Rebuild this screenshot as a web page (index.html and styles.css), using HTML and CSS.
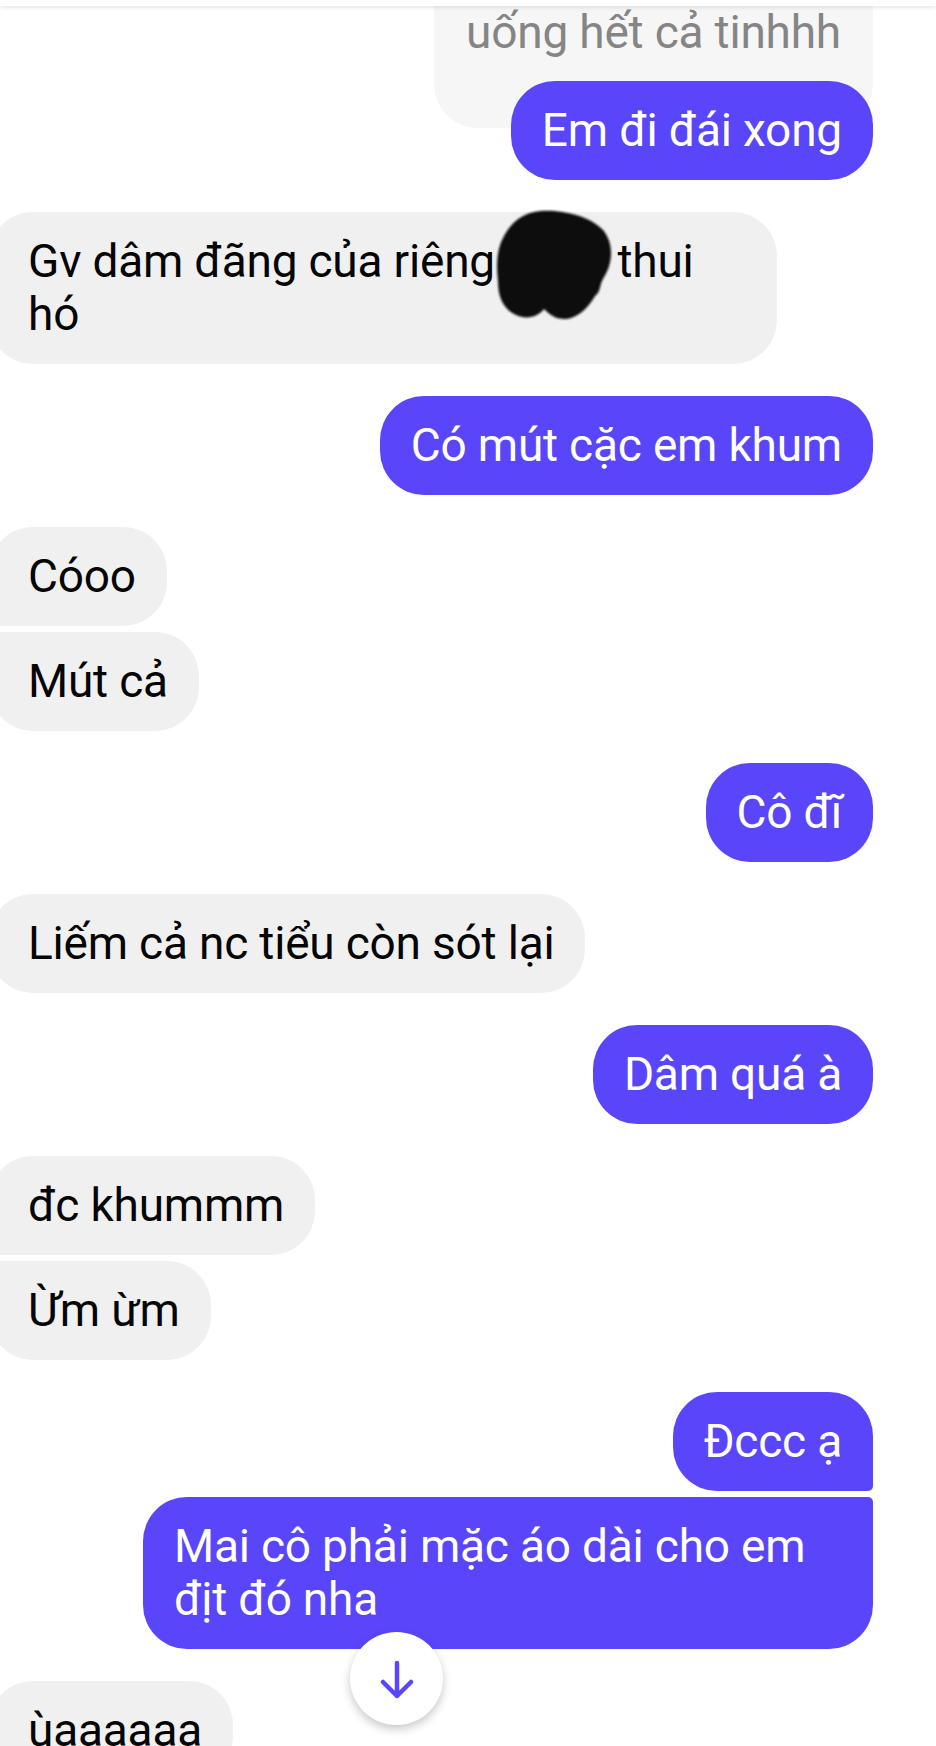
FILE: index.html
```html
<!DOCTYPE html>
<html lang="vi">
<head>
<meta charset="utf-8">
<title>Chat</title>
<link rel="stylesheet" href="styles.css">
</head>
<body>
<div class="topbar"></div>
<main class="thread">
  <div class="quote">uống hết cả tinhhh</div>
  <div class="bubble out after-quote">Em đi đái xong</div>

  <div class="bubble in group">Gv dâm đãng của riêng <span class="redact"><svg class="blob" width="124" height="116" viewBox="0 0 124 116"><defs><filter id="soft" x="-10%" y="-10%" width="120%" height="120%"><feGaussianBlur stdDeviation="1.3"/></filter></defs><path filter="url(#soft)" fill="#111" d="M40 3 C60 -1 94 5 109 21 C120 34 119 54 110 68 C105 76 107 83 101 87 C96 96 86 108 73 110 C62 111 55 105 50 100 C44 108 32 111 22 106 C9 100 4 88 4 72 C2 56 3 40 9 29 C16 15 26 6 40 3 Z"/></svg></span> thui hó</div>

  <div class="bubble out group">Có mút cặc em khum</div>

  <div class="bubble in group first">Cóoo</div>
  <div class="bubble in cont last">Mút cả</div>

  <div class="bubble out group">Cô đĩ</div>

  <div class="bubble in group">Liếm cả nc tiểu còn sót lại</div>

  <div class="bubble out group">Dâm quá à</div>

  <div class="bubble in group first">đc khummm</div>
  <div class="bubble in cont last">Ừm ừm</div>

  <div class="bubble out group first">Đccc ạ</div>
  <div class="bubble out cont last">Mai cô phải mặc áo dài cho em địt đó nha</div>

  <div class="bubble in group">ùaaaaaa</div>
</main>
<div class="scroll-down">
  <svg width="40" height="40" viewBox="0 0 40 40"><path d="M20 4 V37 M6 23 L20 37 L34 23" fill="none" stroke="#5a46fa" stroke-width="4.5" stroke-linecap="round" stroke-linejoin="round"/></svg>
</div>
</body>
</html>
```

FILE: styles.css
```css
html, body {
  margin: 0;
  padding: 0;
}
body {
  background: #ffffff;
  font-family: Roboto, "Noto Sans", "Liberation Sans", sans-serif;
  letter-spacing: -0.2px;
  width: 936px;
  height: 1746px;
  overflow: hidden;
  position: relative;
}
.topbar {
  position: absolute;
  top: 0;
  left: 0;
  right: 0;
  height: 6px;
  background: #ffffff;
  box-shadow: 0 1px 5px rgba(0, 0, 0, 0.13);
  z-index: 3;
}
.thread {
  display: flex;
  flex-direction: column;
}
.quote {
  align-self: flex-end;
  margin-right: 63px;
  margin-top: -34px;
  padding: 40px 32px 69px 32px;
  background: #f6f6f6;
  color: #858585;
  font-size: 46px;
  line-height: 53px;
  border-radius: 44px;
}
.bubble {
  box-sizing: border-box;
  font-size: 46px;
  line-height: 53px;
  padding: 23px 31px;
  border-radius: 44px;
}
.out {
  align-self: flex-end;
  margin-right: 63px;
  max-width: 730px;
  background: #5a46fa;
  color: #ffffff;
}
.in {
  align-self: flex-start;
  margin-left: -11px;
  padding-left: 39px;
  max-width: 788px;
  background: #f0f0f0;
  color: #050505;
}
.after-quote {
  margin-top: -47px;
}
.group {
  margin-top: 32px;
}
.cont {
  margin-top: 6px;
}
.out.first {
  border-bottom-right-radius: 5px;
}
.out.last {
  border-top-right-radius: 5px;
}
.in.first {
  border-bottom-left-radius: 5px;
}
.in.last {
  border-top-left-radius: 5px;
}
.redact {
  display: inline-block;
  position: relative;
  width: 100px;
  height: 53px;
  vertical-align: top;
}
.blob {
  position: absolute;
  left: -12px;
  top: -26px;
}
.scroll-down {
  position: absolute;
  left: 350px;
  top: 1632px;
  width: 93px;
  height: 93px;
  border-radius: 50%;
  background: #ffffff;
  box-shadow: 0 4px 10px rgba(0, 0, 0, 0.22);
  display: flex;
  align-items: center;
  justify-content: center;
  z-index: 2;
}
```
